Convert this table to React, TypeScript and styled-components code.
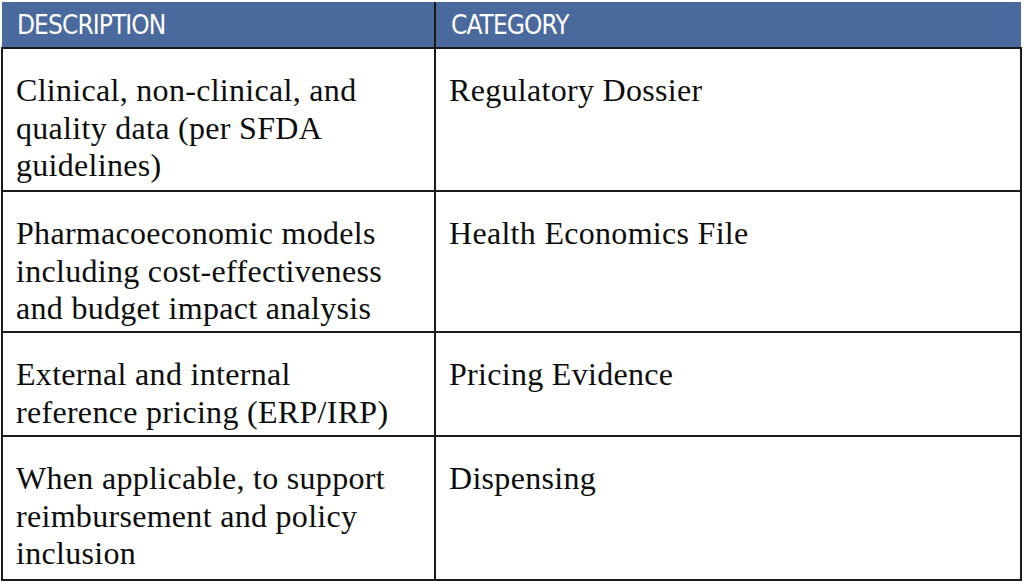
import React from "react";
import styled, { createGlobalStyle } from "styled-components";

const Global = createGlobalStyle`
  html, body { margin: 0; padding: 0; background: #ffffff; }
  body { width: 1024px; height: 585px; overflow: hidden; }
`;

const Table = styled.table`
  margin: 2px 0 0 1px;
  width: 1021px;
  border-collapse: collapse;
  table-layout: fixed;
`;

const HeadCell = styled.th<{ $w?: number }>`
  width: ${(p) => (p.$w ? `${p.$w}px` : "auto")};
  height: 45px;
  padding: 0 0 0 15px;
  background: #4a699d;
  color: #ffffff;
  text-align: left;
  font-family: "DejaVu Sans Condensed", "DejaVu Sans", sans-serif;
  font-stretch: condensed;
  font-weight: 400;
  font-size: 26px;
  line-height: 30px;
  letter-spacing: -0.9px;
  border-left: 2px solid #1a1a1a;
  &:first-child { border-left: none; }
`;

const Row = styled.tr<{ $h: number }>`
  height: ${(p) => p.$h}px;
`;

const Cell = styled.td`
  vertical-align: top;
  padding: 23px 30px 0 13px;
  border: 2px solid #1a1a1a;
  font-family: "Liberation Serif", "DejaVu Serif", serif;
  font-size: 32px;
  letter-spacing: 0.3px;
  line-height: 37.5px;
  color: #0d0d0d;
`;

const rows = [
  { d: "Clinical, non-clinical, and quality data (per SFDA guidelines)", c: "Regulatory Dossier", h: 143 },
  { d: "Pharmacoeconomic models including cost-effectiveness and budget impact analysis", c: "Health Economics File", h: 141 },
  { d: "External and internal reference pricing (ERP/IRP)", c: "Pricing Evidence", h: 104 },
  { d: "When applicable, to support reimbursement and policy inclusion", c: "Dispensing", h: 144 },
];

export default function App() {
  return (
    <>
      <Global />
      <Table>
        <thead>
          <tr>
            <HeadCell $w={417}>DESCRIPTION</HeadCell>
            <HeadCell>CATEGORY</HeadCell>
          </tr>
        </thead>
        <tbody>
          {rows.map((r) => (
            <Row key={r.c} $h={r.h}>
              <Cell>{r.d}</Cell>
              <Cell>{r.c}</Cell>
            </Row>
          ))}
        </tbody>
      </Table>
    </>
  );
}
